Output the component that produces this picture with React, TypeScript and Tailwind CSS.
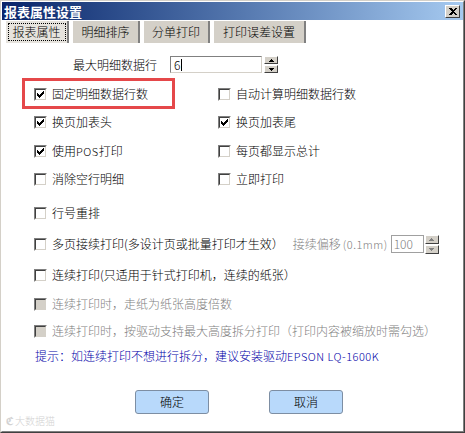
import React from 'react'

const cjk = "font-['Noto_Sans_CJK_SC',sans-serif] font-light"
const latin = 'text-[11px] tracking-[0.5px]'

// classic 7x7 tick, pixel by pixel
const tickPixels: [number, number][] = [
  [6, 0], [5, 1], [6, 1], [0, 2], [4, 2], [5, 2], [6, 2],
  [0, 3], [1, 3], [3, 3], [4, 3], [5, 3], [0, 4], [1, 4], [2, 4], [3, 4], [4, 4],
  [1, 5], [2, 5], [3, 5], [2, 6],
]

function CheckBox({ checked = false, disabled = false }: { checked?: boolean; disabled?: boolean }) {
  return (
    <span className="flex h-[13px] w-[13px] shrink-0 border border-t-[#808080] border-l-[#808080] border-r-white border-b-white">
      <span
        className={`flex flex-1 items-center justify-center border border-t-[#404040] border-l-[#404040] border-r-[#d4d0c8] border-b-[#d4d0c8] ${
          disabled ? 'bg-[#d4d0c8]' : 'bg-white'
        }`}
      >
        {checked && (
          <svg width="7" height="7" viewBox="0 0 7 7" shapeRendering="crispEdges">
            {tickPixels.map(([x, y]) => (
              <rect key={`${x}-${y}`} x={x} y={y} width="1" height="1" fill="#000" />
            ))}
          </svg>
        )}
      </span>
    </span>
  )
}

function Arrow({ up, disabled }: { up: boolean; disabled?: boolean }) {
  return (
    <svg width="5" height="3" viewBox="0 0 5 3" shapeRendering="crispEdges">
      <path d={up ? 'M2 0h1v1h1v1h1v1H0V2h1V1h1z' : 'M0 0h5v1H4v1H3v1H2V2H1V1H0z'} fill={disabled ? '#808080' : '#000'} />
    </svg>
  )
}

function Spinner({ disabled = false, height = 17 }: { disabled?: boolean; height?: number }) {
  const half = height === 17 ? 'h-[8px]' : 'h-[9px]'
  return (
    <div className="flex w-[14px] flex-col justify-between gap-px">
      {[true, false].map((up) => (
        <div
          key={String(up)}
          className={`flex ${half} items-center justify-center border border-t-white border-l-white border-r-[#404040] border-b-[#404040] bg-[#d4d0c8]`}
        >
          <Arrow up={up} disabled={disabled} />
        </div>
      ))}
    </div>
  )
}

function Option({
  label,
  checked,
  disabled,
}: {
  label: React.ReactNode
  checked?: boolean
  disabled?: boolean
}) {
  return (
    <div className="flex h-[18px] items-center gap-[5px]">
      <CheckBox checked={checked} disabled={disabled} />
      <span className={`whitespace-nowrap text-[12px] leading-none ${disabled ? 'text-[#808080]' : 'text-black'}`}>
        {label}
      </span>
    </div>
  )
}

const tabs = [
  { name: '报表属性', w: 'w-[64px]' },
  { name: '明细排序', w: 'w-[68px]' },
  { name: '分单打印', w: 'w-[67px]' },
  { name: '打印误差设置', w: 'w-[93px]' },
]

export default function App() {
  return (
    <div className={`${cjk} relative flex h-[433px] w-[465px] flex-col border border-t-[#d4d0c8] border-l-[#d4d0c8] border-r-[#404040] border-b-[#404040] bg-[#d4d0c8]`}>
      <div className="flex flex-1 flex-col border border-t-white border-l-white border-r-[#808080] border-b-[#808080]">
        {/* Title bar */}
        <div className="flex h-[18px] items-center justify-between bg-linear-to-r from-[#0a246a] to-[#a6caf0] pl-[2px] pr-[3px]">
          <span className="text-[13px] font-bold leading-none text-white">报表属性设置</span>
          <div className="flex h-[13px] w-[15px] items-center justify-center border border-t-white border-l-white border-r-[#404040] border-b-[#404040] bg-[#d4d0c8]">
            <svg width="8" height="7" viewBox="0 0 8 7" shapeRendering="crispEdges">
              <path d="M0 0h2l2 2 2-2h2L5 3.5 8 7H6L4 5 2 7H0l3-3.5z" fill="#000" />
            </svg>
          </div>
        </div>

        {/* Body */}
        <div className="flex flex-1 flex-col bg-white">
          {/* Tabs */}
          <div className="flex gap-[3px] pl-[3px] pt-px">
            {tabs.map((t, i) => (
              <div
                key={t.name}
                className={`flex h-[22px] ${t.w} items-center justify-center border-l border-r-2 border-l-white border-r-[#808080] ${
                  i === 0 ? 'bg-[#e6e3dd]' : 'bg-[#d4d0c8]'
                }`}
              >
                {i === 0 ? (
                  <span className="flex h-[18px] w-[58px] items-center justify-center border border-dotted border-black text-[12px] leading-none">
                    {t.name}
                  </span>
                ) : (
                  <span className="text-[12px] leading-none">{t.name}</span>
                )}
              </div>
            ))}
          </div>

          {/* Max rows */}
          <div className="mt-[13px] flex h-[17px] items-center pl-[71px]">
            <span className="w-[84px] text-[12px] leading-none">最大明细数据行</span>
            <div className="ml-[13px] flex h-[17px] w-[92px] items-center border border-t-[#808080] border-l-[#808080] border-r-[#d4d0c8] border-b-[#d4d0c8] bg-white pl-[3px]">
              <span className="text-[12px] leading-none">6</span>
              <span className="ml-px h-[12px] w-px bg-black" />
            </div>
            <div className="ml-[2px]">
              <Spinner />
            </div>
          </div>

          {/* Options */}
          <div className="flex flex-col pl-[32px]">
            <div className="mt-[12px] grid grid-cols-[184px_1fr]">
              <div className="relative">
                <Option label="固定明细数据行数" checked />
                <div className="pointer-events-none absolute left-[-12px] top-[-7px] h-[31px] w-[153px] border-[3px] border-[#e5484a]" />
              </div>
              <Option label="自动计算明细数据行数" />
            </div>
            <div className="mt-[10px] grid grid-cols-[184px_1fr]">
              <Option label="换页加表头" checked />
              <Option label="换页加表尾" checked />
            </div>
            <div className="mt-[11px] grid grid-cols-[184px_1fr]">
              <Option
                label={
                  <>
                    使用<span className={latin}>POS</span>打印
                  </>
                }
                checked
              />
              <Option label="每页都显示总计" />
            </div>
            <div className="mt-[10px] grid grid-cols-[184px_1fr]">
              <Option label="消除空行明细" />
              <Option label="立即打印" />
            </div>
            <div className="mt-[16px]">
              <Option label="行号重排" />
            </div>
            <div className="mt-[13px] flex h-[18px] items-center">
              <Option label="多页接续打印(多设计页或批量打印才生效）" />
              <span className="ml-[9px] whitespace-nowrap text-[12px] leading-none text-[#808080]">
                接续偏移<span className={`${latin} ml-[2px]`}>(0.1mm)</span>
              </span>
              <div className="ml-[3px] flex h-[18px] w-[33px] items-center border border-[#a0a0a0] bg-white pl-[2px] text-[12px] leading-none text-[#808080]">
                100
              </div>
              <div className="ml-px">
                <Spinner disabled height={18} />
              </div>
            </div>
            <div className="mt-[13px]">
              <Option label="连续打印(只适用于针式打印机，连续的纸张）" />
            </div>
            <div className="mt-[11px]">
              <Option label="连续打印时，走纸为纸张高度倍数" disabled />
            </div>
            <div className="mt-[9px]">
              <Option label="连续打印时，按驱动支持最大高度拆分打印（打印内容被缩放时需勾选）" disabled />
            </div>
            <div className="mt-[7px] flex h-[18px] items-center pl-px">
              <span className="whitespace-nowrap text-[12px] leading-none text-[#0000a8]">
                提示：如连续打印不想进行拆分，建议安装驱动<span className={latin}>EPSON LQ-1600K</span>
              </span>
            </div>
          </div>

          {/* Buttons */}
          <div className="mt-[25px] flex gap-[60px] pl-[133px]">
            <button className="flex h-[24px] w-[74px] items-center justify-center rounded-[3px] border border-[#7d8ea3] bg-[#b8d9fb] text-[12px] leading-none text-black">
              确定
            </button>
            <button className="flex h-[24px] w-[74px] items-center justify-center rounded-[3px] border border-[#7d8ea3] bg-[#b8d9fb] text-[12px] leading-none text-black">
              取消
            </button>
          </div>
        </div>
      </div>

      {/* watermark */}
      <div className="pointer-events-none absolute bottom-[6px] left-[5px] flex items-center gap-[2px] text-[10px] leading-none text-[#d2d2d2]">
        <span className="text-[11px] font-bold">ℭ</span>
        <span>大数据猫</span>
      </div>
    </div>
  )
}
